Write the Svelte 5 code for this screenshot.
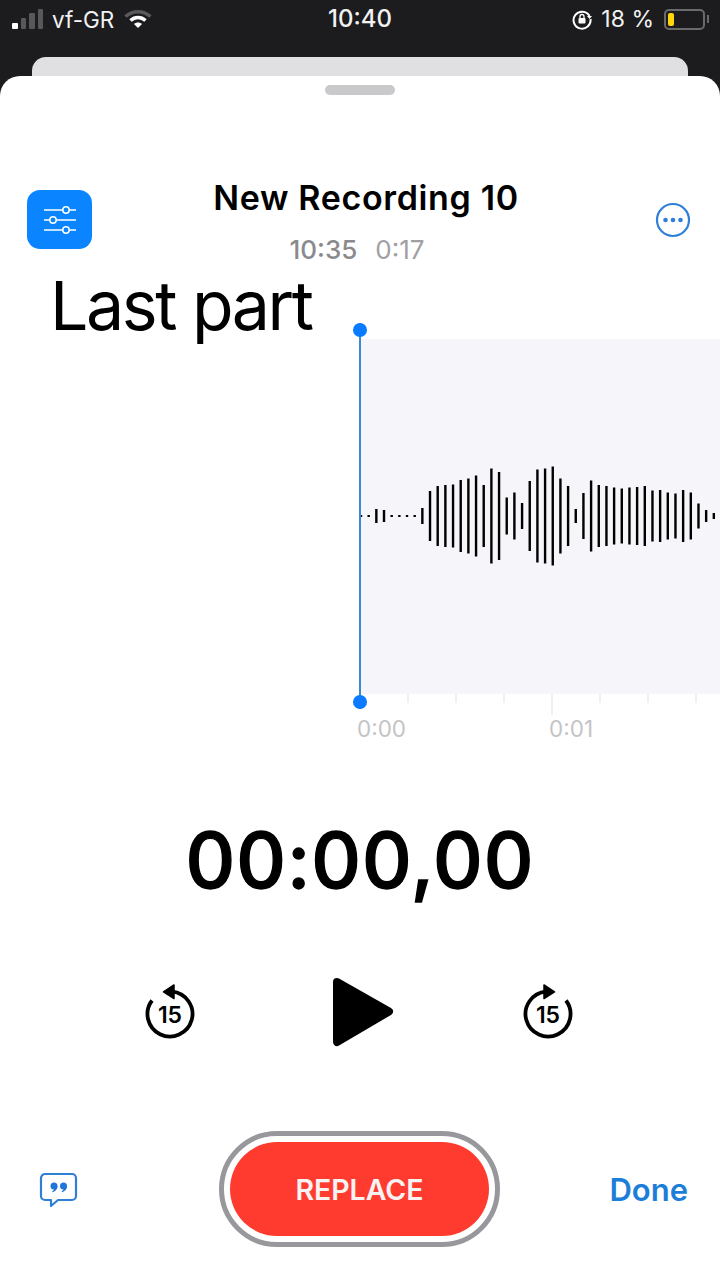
<script>
  const heights = [2,2,14,12,2,2,2,2,16,50,60,62,63,72,75,81,62,95,88,37,47,26,70,93,95,99,75,60,14,46,71,62,60,57,55,57,58,60,51,52,47,45,52,47,25,12,6];
  const ticks = [0,1,2,3,4,5,6];
</script>

<div class="page">
  <header class="status">
    <div class="left">
      <span class="signal"><i class="on s1"></i><i class="s2"></i><i class="s3"></i><i class="s4"></i></span>
      <span class="carrier">vf-GR</span>
      <svg class="wifi" width="28" height="20" viewBox="0 0 28 20" fill="none">
        <path d="M1.500 7.500C9 1 19 1 26.500 7.500" stroke="#5a5a5c" stroke-width="3.500"/>
        <path d="M6.500 11.500C11 7.500 17 7.500 21.500 11.500" stroke="#fff" stroke-width="3.500"/>
        <path d="M10 15c2.400-2 5.600-2 8 0L14 19z" fill="#fff"/>
      </svg>
    </div>
    <div class="clock">10:40</div>
    <div class="right">
      <svg width="22" height="22" viewBox="0 0 22 22" fill="none">
        <path d="M18.500 8A8.500 8.500 0 1 0 19.500 11" stroke="#fff" stroke-width="2"/>
        <path d="M16 8h5l-2.500 3z" fill="#fff"/>
        <rect x="7.500" y="10" width="7" height="5.500" rx="1" fill="#fff"/>
        <path d="M9 10V8.500a2 2 0 0 1 4 0V10" stroke="#fff" stroke-width="1.300"/>
      </svg>
      <span class="pct">18 %</span>
      <span class="battery"><i></i></span><span class="nub"></span>
    </div>
  </header>

  <div class="behind"></div>

  <main class="sheet">
    <div class="grabber"></div>

    <section class="head">
      <button class="settings" aria-label="Settings">
        <svg width="36" height="28" viewBox="0 0 36 28" fill="none" stroke="#fff" stroke-width="1.500">
          <path d="M2 4h18.800M27.200 4h6.800M2 14h5.800M14.200 14h19.800M2 24h18.800M27.200 24h6.800"/>
          <circle cx="24" cy="4" r="3.200"/><circle cx="11" cy="14" r="3.200"/><circle cx="24" cy="24" r="3.200"/>
        </svg>
      </button>
      <div class="titles">
        <h1>New Recording 10</h1>
        <p><b>10:35</b><span>0:17</span></p>
      </div>
      <button class="more" aria-label="More">
        <svg width="36" height="36" viewBox="0 0 36 36" fill="#2f7fd6">
          <circle cx="18" cy="18" r="16" fill="none" stroke="#2f7fd6" stroke-width="2.200"/>
          <circle cx="10.500" cy="18" r="2.300"/><circle cx="18" cy="18" r="2.300"/><circle cx="25.500" cy="18" r="2.300"/>
        </svg>
      </button>
    </section>

    <section class="track">
      <div class="caption">Last part</div>
      <svg class="wave" width="360" height="355" viewBox="0 0 360 355">
        {#each heights as h, i}
          <rect x={1 + i * 7.67 - 1.2} y={177 - h / 2} width="2.400" height={h} fill="#000"/>
        {/each}
      </svg>
      <div class="ruler">
        {#each ticks as t}
          <i class:long={t === 3}></i>
        {/each}
      </div>
      <div class="labels"><span>0:00</span><span>0:01</span></div>
      <div class="playhead"><i></i><i></i></div>
    </section>

    <div class="timer">00:00,00</div>

    <section class="transport">
      <svg width="54" height="64" viewBox="0 0 54 64" fill="none">
        <path d="M29 13.600A22.500 22.500 0 1 1 9 22.500" stroke="#000" stroke-width="3.800"/>
        <path d="M31 7L20.500 13.800L31 20.500z" fill="#000" stroke="#000" stroke-linejoin="round" stroke-width="1.500"/>
        <text x="27" y="44.500" text-anchor="middle" class="skipnum">15</text>
      </svg>
      <svg class="play" width="62" height="70" viewBox="0 0 62 70">
        <path d="M5 5L57 34.500L5 65z" fill="#000" stroke="#000" stroke-width="8" stroke-linejoin="round"/>
      </svg>
      <svg width="54" height="64" viewBox="0 0 54 64" fill="none">
        <path d="M25 13.600A22.500 22.500 0 1 0 45 22.500" stroke="#000" stroke-width="3.800"/>
        <path d="M23 7L33.500 13.800L23 20.500z" fill="#000" stroke="#000" stroke-linejoin="round" stroke-width="1.500"/>
        <text x="27" y="44.500" text-anchor="middle" class="skipnum">15</text>
      </svg>
    </section>

    <section class="actions">
      <button class="quote" aria-label="Transcript">
        <svg width="40" height="36" viewBox="0 0 40 36" fill="none">
          <path d="M6 2h27a4 4 0 0 1 4 4v18a4 4 0 0 1-4 4H19l-7 6v-6H6a4 4 0 0 1-4-4V6a4 4 0 0 1 4-4z" stroke="#2f7fd6" stroke-width="2.200" stroke-linejoin="round"/>
          <circle cx="15" cy="14" r="3.500" fill="#1f76d8"/>
          <circle cx="24.500" cy="14" r="3.500" fill="#1f76d8"/>
          <path d="M18.500 14c0 3-2 5.300-4.800 6.300l-.6-1.100c1.200-.8 1.800-1.500 2-2.300z" fill="#1f76d8"/>
          <path d="M28 14c0 3-2 5.300-4.800 6.300l-.6-1.100c1.200-.8 1.800-1.500 2-2.300z" fill="#1f76d8"/>
        </svg>
      </button>
      <button class="replace"><span>REPLACE</span></button>
      <button class="done">Done</button>
    </section>
  </main>
</div>

<style>
  :global(body) { margin: 0; }
  .page {
    width: 720px; height: 1280px; background: #1c1c1e; overflow: hidden;
    display: flex; flex-direction: column;
    font-family: Inter, "Liberation Sans", sans-serif; color: #000;
  }
  button { border: 0; background: none; padding: 0; font: inherit; display: block; }
  i { display: block; }

  .status { height: 57px; flex: none; position: relative; display: flex; justify-content: space-between; align-items: center; padding: 0 11px 19px 12px; box-sizing: border-box; color: #f2f2f2; font-size: 23px; }
  .left, .right { display: flex; align-items: center; }
  .signal { display: flex; align-items: flex-end; gap: 3px; width: 33px; height: 20px; }
  .signal i { width: 5.500px; background: #58585a; border-radius: 1px; }
  .signal .on { background: #fff; }
  .s1 { height: 6px; } .s2 { height: 11px; } .s3 { height: 16px; } .s4 { height: 20px; }
  .carrier { margin-left: 7px; font-size: 22.500px; }
  .wifi { margin-left: 10px; }
  .clock { position: absolute; left: 0; right: 0; top: 4px; text-align: center; font-weight: 500; font-size: 24px; }
  .right svg { margin-right: 8px; }
  .pct { margin-right: 10px; }
  .battery { border: 2px solid #6a6a6c; border-radius: 5px; padding: 2px; display: block; width: 33px; height: 13px; }
  .battery i { width: 6px; height: 13px; background: #ffd60a; border-radius: 2px; }
  .nub { width: 2px; height: 8px; background: #6a6a6c; margin-left: 2px; }

  .behind { height: 19px; flex: none; margin: 0 32px; background: #e0e0e2; border-radius: 14px 14px 0 0; }

  .sheet { flex: 1; background: #fff; border-radius: 20px 20px 0 0; display: flex; flex-direction: column; position: relative; }
  .grabber { width: 70px; height: 10px; border-radius: 5px; background: #c9c9cb; margin: 9px auto 0; flex: none; }

  .head { display: grid; grid-template-columns: 65px 1fr 36px; margin-top: 82px; padding: 0 29px 0 27px; height: 90px; }
  .settings { width: 65px; height: 59px; margin-top: 13px; background: #0a84ff; border-radius: 13px; display: flex; align-items: center; justify-content: center; }
  .titles { text-align: center; padding-right: 15px; white-space: nowrap; }
  h1 { margin: 0; font-size: 34px; line-height: 42px; font-weight: 600; letter-spacing: 0.650px; }
  .titles p { margin: 16px 0 0; font-size: 26px; line-height: 30px; color: #a0a0a4; display: flex; justify-content: center; gap: 18px; padding-right: 18px; }
  .titles b { font-weight: 500; color: #8a8a8e; }
  .more { margin-top: 25px; width: 36px; height: 36px; }

  .track { position: relative; padding-left: 360px; margin-top: 72px; height: 399px; flex: none; }
  .caption { position: absolute; left: 50px; top: -76px; font-size: 68px; line-height: 84px; letter-spacing: -2.400px; }
  .wave { display: block; background: #f6f5fa; }
  .ruler { display: flex; gap: 46px; height: 21px; padding-left: 47px; }
  .ruler i { width: 2px; height: 9px; background: #f0f0f2; flex: none; }
  .ruler .long { height: 21px; }
  .labels { display: flex; gap: 143px; font-size: 22.500px; line-height: 26px; color: #c4c4c6; margin-left: -3px; padding-top: 1px; }
  .playhead { position: absolute; left: 353px; top: -16px; width: 14px; height: 386px; display: flex; flex-direction: column; justify-content: space-between; background: linear-gradient(#3a8ad0, #3a8ad0) center / 2px 100% no-repeat; }
  .playhead i { width: 14px; height: 14px; border-radius: 50%; background: #0a7aff; }

  .timer { text-align: center; font-size: 77px; font-weight: 500; line-height: 88px; margin-top: 78px; letter-spacing: 1px; -webkit-text-stroke: 1.300px #000; }

  .transport { display: flex; justify-content: center; align-items: center; height: 80px; margin-top: 68px; padding-right: 2px; }
  .transport svg:first-child { margin-right: 135px; margin-top: -4px; }
  .transport svg:last-child { margin-left: 127px; margin-top: -4px; }
  .skipnum { font: 600 23px Inter, sans-serif; fill: #000; }
  .actions { display: flex; align-items: center; justify-content: space-between; padding: 0 32px 0 39px; margin-top: 79px; }
  .quote { width: 40px; height: 36px; margin-top: 2px; }
  .replace { width: 281px; height: 116px; box-sizing: border-box; border: 5px solid #98979b; border-radius: 58px; padding: 6px; margin-left: 140px; flex: none; }
  .replace span { display: flex; align-items: center; justify-content: center; height: 100%; background: #ff3b30; border-radius: 48px; color: #f8f3f2; font-weight: 600; font-size: 28.500px; }
  .done { color: #1c7ed9; font-size: 31px; font-weight: 600; margin-left: auto; }
</style>
